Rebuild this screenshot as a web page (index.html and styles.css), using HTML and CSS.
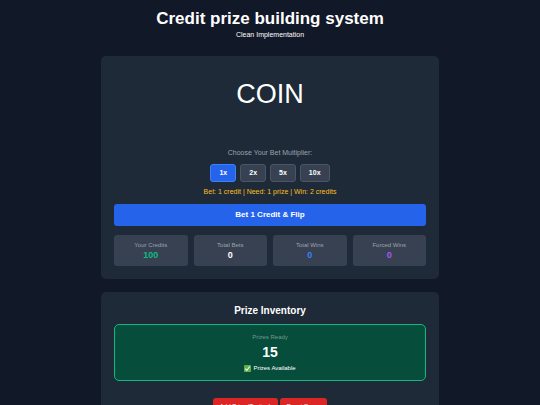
FILE: index.html
```html
<!DOCTYPE html>
<html lang="en">
<head>
    <meta charset="UTF-8">
    <meta name="viewport" content="width=device-width, initial-scale=1.0">
    <title>Credit prize building system</title>
    <link rel="stylesheet" href="styles.css">
</head>
<body>

    <div class="container">
        <header class="header">
            <h1>Credit prize building system</h1>
            <p>Clean Implementation</p>
        </header>

        <section class="card">
            <div class="coin">COIN</div>
            <div class="result" id="result"></div>

            <p class="bet-label" id="betLabel">Choose Your Bet Multiplier:</p>
            <div class="multipliers" role="group" aria-labelledby="betLabel">
                <button type="button" class="multiplier active">1x</button>
                <button type="button" class="multiplier">2x</button>
                <button type="button" class="multiplier">5x</button>
                <button type="button" class="multiplier">10x</button>
            </div>
            <p class="bet-info">Bet: 1 credit | Need: 1 prize | Win: 2 credits</p>

            <button type="button" class="flip-btn">Bet 1 Credit &amp; Flip</button>

            <div class="stats">
                <div class="stat">
                    <div class="stat-label">Your Credits</div>
                    <div class="stat-value green">100</div>
                </div>
                <div class="stat">
                    <div class="stat-label">Total Bets</div>
                    <div class="stat-value">0</div>
                </div>
                <div class="stat">
                    <div class="stat-label">Total Wins</div>
                    <div class="stat-value blue">0</div>
                </div>
                <div class="stat">
                    <div class="stat-label">Forced Wins</div>
                    <div class="stat-value purple">0</div>
                </div>
            </div>
        </section>

        <section class="card">
            <h2>Prize Inventory</h2>
            <div class="inventory">
                <div class="inventory-label">Prizes Ready</div>
                <div class="inventory-count">15</div>
                <div class="inventory-status">
                    <svg class="check" viewBox="0 0 16 16" aria-hidden="true">
                        <rect width="16" height="16" rx="2" fill="#5fae46"/>
                        <path d="M3 8.5 L6.5 12.5 L13 3.5" fill="none" stroke="#fff" stroke-width="2.4"/>
                    </svg>
                    <span>Prizes Available</span>
                </div>
            </div>
            <div class="actions">
                <button type="button" class="danger-btn">Add Prize (Testing)</button>
                <button type="button" class="danger-btn">Reset Game</button>
            </div>
        </section>
    </div>

</body>
</html>
```

FILE: styles.css
```css
* {
    margin: 0;
    padding: 0;
    box-sizing: border-box;
}

body {
    font-family: "Liberation Sans", Arial, sans-serif;
    font-size: 7px;
    line-height: 10px;
    background: #111827;
    color: #fff;
    min-height: 100vh;
    text-align: center;
}

button {
    font-family: inherit;
    color: #fff;
    border: none;
    cursor: pointer;
}

.container {
    max-width: 338px;
    margin: 0 auto;
    padding: 8px 0;
}

.header {
    margin-bottom: 16px;
}

h1 {
    font-size: 17px;
    line-height: 22px;
}

.card {
    background: #1e2a37;
    border-radius: 5px;
    padding: 13px;
    margin-bottom: 13px;
}

.coin {
    font-size: 27px;
    line-height: 50px;
}

.result {
    min-height: 29px;
}

.bet-label {
    color: #9ca3af;
    margin-bottom: 6px;
}

.multipliers {
    display: flex;
    justify-content: center;
    gap: 4px;
}

.multiplier {
    background: #374151;
    border: 1px solid #4b5563;
    border-radius: 3px;
    padding: 3px 8px;
    font-size: 7px;
    line-height: 10px;
    font-weight: bold;
}

.multiplier.active {
    background: #2563eb;
    border-color: #3b82f6;
}

.bet-info {
    color: #fbbf24;
    margin: 5px 0 7px;
}

.flip-btn {
    width: 100%;
    background: #2563eb;
    border-radius: 3px;
    padding: 6px;
    font-size: 8px;
    line-height: 10px;
    font-weight: bold;
    margin-bottom: 9px;
}

.stats {
    display: grid;
    grid-template-columns: repeat(4, 1fr);
    gap: 6px;
}

.stat {
    background: #374151;
    border-radius: 3px;
    padding: 5px;
}

.stat-label {
    font-size: 6px;
    color: #9ca3af;
}

.stat-value {
    font-size: 9px;
    line-height: 11px;
    font-weight: bold;
}

.green {
    color: #10b981;
}

.blue {
    color: #3b82f6;
}

.purple {
    color: #a855f7;
}

h2 {
    font-size: 10px;
    line-height: 12px;
    margin-bottom: 7px;
}

.inventory {
    background: #064e3b;
    border: 1px solid #10b981;
    border-radius: 5px;
    padding: 7px;
    margin-bottom: 17px;
}

.inventory-label {
    font-size: 6px;
    color: #6f9a8f;
}

.inventory-count {
    font-size: 14px;
    line-height: 21px;
    font-weight: bold;
}

.inventory-status {
    display: flex;
    justify-content: center;
    align-items: center;
    gap: 2px;
    font-size: 6px;
}

.check {
    width: 7px;
    height: 7px;
}

.actions {
    display: flex;
    justify-content: center;
    gap: 2px;
}

.danger-btn {
    background: #dc2626;
    border-radius: 3px;
    padding: 3px 7px;
    font-size: 6px;
    line-height: 10px;
}
```
